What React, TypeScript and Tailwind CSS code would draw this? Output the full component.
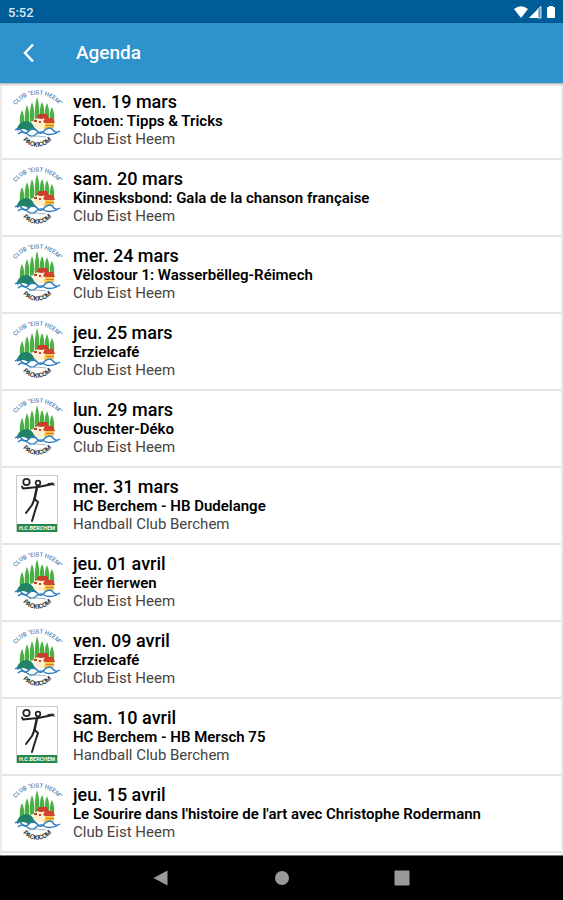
import { useId } from "react";

type Organizer = "eist-heem" | "hc-berchem";

interface AgendaEvent {
  date: string;
  title: string;
  organizer: Organizer;
}

const ORGANIZER_NAMES: Record<Organizer, string> = {
  "eist-heem": "Club Eist Heem",
  "hc-berchem": "Handball Club Berchem",
};

const EVENTS: AgendaEvent[] = [
  { date: "ven. 19 mars", title: "Fotoen: Tipps & Tricks", organizer: "eist-heem" },
  { date: "sam. 20 mars", title: "Kinnesksbond: Gala de la chanson française", organizer: "eist-heem" },
  { date: "mer. 24 mars", title: "Vëlostour 1: Wasserbëlleg-Réimech", organizer: "eist-heem" },
  { date: "jeu. 25 mars", title: "Erzielcafé", organizer: "eist-heem" },
  { date: "lun. 29 mars", title: "Ouschter-Déko", organizer: "eist-heem" },
  { date: "mer. 31 mars", title: "HC Berchem - HB Dudelange", organizer: "hc-berchem" },
  { date: "jeu. 01 avril", title: "Eeër fierwen", organizer: "eist-heem" },
  { date: "ven. 09 avril", title: "Erzielcafé", organizer: "eist-heem" },
  { date: "sam. 10 avril", title: "HC Berchem - HB Mersch 75", organizer: "hc-berchem" },
  { date: "jeu. 15 avril", title: "Le Sourire dans l'histoire de l'art avec Christophe Rodermann", organizer: "eist-heem" },
];

function EistHeemLogo() {
  const id = useId();
  return (
    <svg viewBox="0 0 48 58" className="h-[58px] w-12 overflow-visible" aria-hidden="true">
      <path id={`${id}-top`} d="M0 18 C10 0 36 0 47 18" fill="none" />
      <path id={`${id}-bottom`} d="M6 44 C12 61 34 61 41 44" fill="none" />
      <text fontSize="6" fontWeight="500" fill="#4f86bd">
        <textPath href={`#${id}-top`} startOffset="50%" textAnchor="middle">CLUB "EIST HEEM"</textPath>
      </text>
      {/* Poplars */}
      <g fill="#4bb044">
        <path d="M8 20 Q11 26 10 34 L6 35 Q5 26 8 20Z" />
        <path d="M13 15 Q16 22 15 32 L11 34 Q10 22 13 15Z" />
        <path d="M18 12 Q21 19 20 31 L16 32 Q15 20 18 12Z" />
        <path d="M23 7 Q26 16 25 28 L21 32 Q20 17 23 7Z" />
        <path d="M28 12 Q31 18 30 25 L26 27 Q25 18 28 12Z" />
        <path d="M33 13 Q36 20 35 28 L31 27 Q30 20 33 13Z" />
        <path d="M38 17 Q41 23 40 32 L36 30 Q35 22 38 17Z" />
      </g>
      {/* Houses */}
      <path d="M19 31 L26 26 L32 29 L32 39 H24 L19 36Z" fill="#fff1d2" />
      <path d="M22 28 L25 24 H33 L35 28 L27 29Z" fill="#c93d2c" />
      <path d="M20 30 h3 v2 h-3Z M25 31 h2 v2 h-2Z" fill="#c93d2c" />
      <path d="M29 32 L31 28 H39 L41 33 H31Z" fill="#d0432c" />
      <path d="M31 33 H40 V38 L30 39Z" fill="#f7c63e" />
      <path d="M32 35.500 H40" stroke="#e2742e" strokeWidth="1" />
      {/* Hill and river */}
      <path d="M3 38 Q6 31 12 31 Q18 31 20 37 L24 41 Q18 39 14 41 Q9 37 3 41Z" fill="#218268" />
      <path d="M1 40 Q5 37 8 41 T15 41 Q19 36 23 41 T31 40 Q36 36 39 40 T46 41" fill="none" stroke="#2f7fc4" strokeWidth="1.500" />
      <path d="M4 44 Q8 40 13 44 T21 45 Q26 40 30 43 T43 43" fill="none" stroke="#2f7fc4" strokeWidth="1.300" />
      <path d="M15 47 Q23 45 32 47" fill="none" stroke="#9bb9c9" />
      <text fontSize="6.5" fontWeight="700" fill="#333">
        <textPath href={`#${id}-bottom`} startOffset="50%" textAnchor="middle">PACKICOM</textPath>
      </text>
    </svg>
  );
}

function BerchemLogo() {
  return (
    <svg viewBox="0 0 48 58" className="h-[58px] w-12" aria-hidden="true">
      <rect x="2.500" y="0.500" width="41" height="56" fill="#fff" stroke="#c9c9c9" />
      <g fill="none" stroke="#222" strokeLinecap="round" strokeLinejoin="round">
        <circle cx="12.500" cy="7" r="3.200" strokeWidth="1.700" />
        <circle cx="24" cy="8" r="2.300" strokeWidth="1.700" />
        <path d="M8 11.500 L9 13.500 L24 12 L39 9" strokeWidth="1.800" />
        <path d="M34 8.500 L39.500 8 L40 10.500" strokeWidth="1" />
        <path d="M23 12 L20.500 24" strokeWidth="2.500" />
        <path d="M20.500 24 L18 30 L12 38" strokeWidth="2" />
        <path d="M20.500 24 L24 27 L21 36 L18 46" strokeWidth="2" />
      </g>
      <rect x="3" y="49" width="40" height="8" fill="#238a4b" />
      <text x="23" y="55" fontSize="5.500" fontWeight="700" textAnchor="middle" fill="#fff">H.C.BERCHEM</text>
    </svg>
  );
}

function EventRow({ event }: { event: AgendaEvent }) {
  return (
    <li className="border-b-2 border-[#e4e4e4]">
      <a href="#" className="flex gap-[11px] px-3 pt-[7px] pb-2.5">
        <div className="shrink-0">
          {event.organizer === "eist-heem" ? <EistHeemLogo /> : <BerchemLogo />}
        </div>
        <div className="min-w-0 pt-0.5">
          <h2 className="text-[18px] leading-[20px] font-medium text-black">{event.date}</h2>
          <p className="text-[15px] leading-[18px] font-semibold text-black">{event.title}</p>
          <p className="text-[15px] leading-[18px] text-[#444]">{ORGANIZER_NAMES[event.organizer]}</p>
        </div>
      </a>
    </li>
  );
}

function StatusBar() {
  return (
    <div className="flex h-[23px] items-center justify-between bg-[#005c97] pr-1.5 pl-2 text-white">
      <span className="pt-0.5 text-[13px] leading-4 font-medium text-[#d9e7f1]">5:52</span>
      <svg viewBox="0 0 44 14" className="h-3.5 w-11" fill="#fff" aria-hidden="true">
        <path d="M1 4 Q8 -1.500 15 4 L8 13Z" />
        <path d="M16 13 L28 1 V13Z" fillOpacity=".35" />
        <path d="M16 13 L25 4 V13Z" />
        <path d="M25 13 V4 L28 1.500 V13Z" fill="none" stroke="#fff" strokeWidth=".8" />
        <path d="M36 1 h4 v1 h1 q1 0 1 1 v9 q0 1 -1 1 h-6 q-1 0 -1 -1 v-9 q0 -1 1 -1 h1Z" />
      </svg>
    </div>
  );
}

export default function App() {
  return (
    <div className="flex min-h-screen flex-col bg-white font-[Roboto,sans-serif]">
      <StatusBar />
      <header className="relative flex h-[60px] items-center bg-[#2e92cd] pl-4 text-white shadow-[0_1px_3px_rgba(0,0,0,0.4)]">
        <button type="button" aria-label="Retour" className="flex size-6 items-center justify-center">
          <svg viewBox="0 0 24 24" className="size-6" fill="none" stroke="currentColor" strokeWidth="2.500" aria-hidden="true">
            <path d="M17 3.500 L9 12 L17 20.500" />
          </svg>
        </button>
        <h1 className="pl-9 text-[19px] leading-6 font-medium">Agenda</h1>
      </header>
      <main className="flex-1 border-x-2 border-[#ececec]">
        <ul>
          {EVENTS.map((event) => (
            <EventRow key={event.date} event={event} />
          ))}
        </ul>
      </main>
      <nav className="flex h-[45px] items-center justify-center gap-24 border-t border-[#777] bg-black text-[#999]">
        <button type="button" aria-label="Retour" className="size-6">
          <svg viewBox="0 0 24 24" className="size-6" fill="currentColor" aria-hidden="true">
            <path d="M3.500 12 L17.500 4.500 V19.500Z" />
          </svg>
        </button>
        <button type="button" aria-label="Accueil" className="size-6">
          <svg viewBox="0 0 24 24" className="size-6" fill="currentColor" aria-hidden="true">
            <circle cx="12" cy="12" r="7" />
          </svg>
        </button>
        <button type="button" aria-label="Applications récentes" className="size-6">
          <svg viewBox="0 0 24 24" className="size-6" fill="currentColor" aria-hidden="true">
            <rect x="4.500" y="4.500" width="15" height="15" rx="1" />
          </svg>
        </button>
      </nav>
    </div>
  );
}
